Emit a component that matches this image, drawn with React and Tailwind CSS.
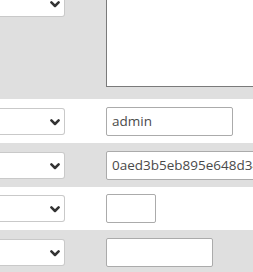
import React from "react";

function Sel({ className = "" }) {
  return (
    <div className={"relative h-[27px] w-[65px] shrink-0 bg-white border border-l-0 border-[#c9c9c9] rounded-r-[3px] " + className}>
      <svg className="absolute left-[50px] top-[10px]" width="10" height="7" viewBox="0 0 10 7">
        <polyline points="1.4,1.4 5,5 8.6,1.4" fill="none" stroke="#333" strokeWidth="2.5" strokeLinecap="round" strokeLinejoin="round" />
      </svg>
    </div>
  );
}

function Inp({ w, value = "" }) {
  return (
    <div
      className="h-[29px] shrink-0 bg-white border border-[#ababab] rounded-[2px] flex items-center pl-[5px] text-[13.5px] text-[#4a4a4a] whitespace-nowrap overflow-hidden"
      style={{ width: w }}
    >
      {value}
    </div>
  );
}

export default function App() {
  return (
    <div className="w-[253px] h-[272px] overflow-hidden bg-white" style={{ fontFamily: '"Open Sans", "Liberation Sans", sans-serif' }}>
      <div className="h-[99px] bg-[#dfdfdf] flex items-start">
        <div className="w-[106px] shrink-0">
          <Sel className="mt-[-10px]" />
        </div>
        <div className="mt-[-10px] h-[97px] w-[160px] shrink-0 bg-white border border-[#7a7a7a]" />
      </div>
      <div className="h-[44px] bg-white flex items-center">
        <div className="w-[106px] shrink-0"><Sel /></div>
        <Inp w="127px" value="admin" />
      </div>
      <div className="h-[44px] bg-[#dfdfdf] flex items-center">
        <div className="w-[106px] shrink-0"><Sel /></div>
        <Inp w="170px" value="0aed3b5eb895e648d34f2a1c" />
      </div>
      <div className="h-[43px] bg-white flex items-center">
        <div className="w-[106px] shrink-0"><Sel /></div>
        <Inp w="50px" />
      </div>
      <div className="h-[44px] bg-[#dfdfdf] flex items-center">
        <div className="w-[106px] shrink-0"><Sel /></div>
        <Inp w="107px" />
      </div>
    </div>
  );
}
